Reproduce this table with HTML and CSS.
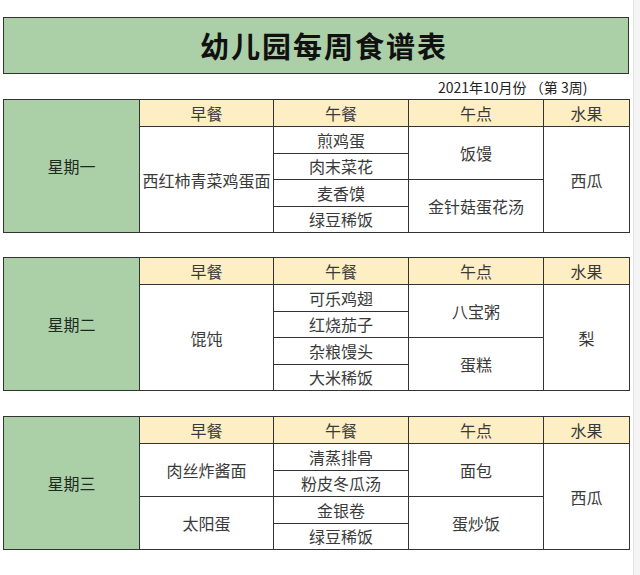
FILE: index.html
```html
<!DOCTYPE html>
<html lang="zh-CN">
<head>
<meta charset="utf-8">
<title>幼儿园每周食谱表</title>
<link rel="stylesheet" href="styles.css">
</head>
<body>
<div class="page">
  <div class="title-box"><h1 class="title">幼儿园每周食谱表</h1></div>
  <div class="subtitle">2021年10月份 （第 3周)</div>

  <table class="menu">
    <colgroup><col class="c-day"><col class="c-bf"><col class="c-lu"><col class="c-sn"><col class="c-fr"></colgroup>
    <tr class="head">
      <td class="day" rowspan="5">星期一</td>
      <td>早餐</td><td>午餐</td><td>午点</td><td>水果</td>
    </tr>
    <tr><td rowspan="4">西红柿青菜鸡蛋面</td><td>煎鸡蛋</td><td rowspan="2">饭馒</td><td rowspan="4">西瓜</td></tr>
    <tr><td>肉末菜花</td></tr>
    <tr><td>麦香馍</td><td rowspan="2">金针菇蛋花汤</td></tr>
    <tr><td>绿豆稀饭</td></tr>
  </table>

  <table class="menu menu-mid">
    <colgroup><col class="c-day"><col class="c-bf"><col class="c-lu"><col class="c-sn"><col class="c-fr"></colgroup>
    <tr class="head">
      <td class="day" rowspan="5">星期二</td>
      <td>早餐</td><td>午餐</td><td>午点</td><td>水果</td>
    </tr>
    <tr><td rowspan="4">馄饨</td><td>可乐鸡翅</td><td rowspan="2">八宝粥</td><td rowspan="4">梨</td></tr>
    <tr><td>红烧茄子</td></tr>
    <tr><td>杂粮馒头</td><td rowspan="2">蛋糕</td></tr>
    <tr><td>大米稀饭</td></tr>
  </table>

  <table class="menu">
    <colgroup><col class="c-day"><col class="c-bf"><col class="c-lu"><col class="c-sn"><col class="c-fr"></colgroup>
    <tr class="head">
      <td class="day" rowspan="5">星期三</td>
      <td>早餐</td><td>午餐</td><td>午点</td><td>水果</td>
    </tr>
    <tr><td rowspan="2">肉丝炸酱面</td><td>清蒸排骨</td><td rowspan="2">面包</td><td rowspan="4">西瓜</td></tr>
    <tr><td>粉皮冬瓜汤</td></tr>
    <tr><td rowspan="2">太阳蛋</td><td>金银卷</td><td rowspan="2">蛋炒饭</td></tr>
    <tr><td>绿豆稀饭</td></tr>
  </table>
</div>
</body>
</html>
```

FILE: styles.css
```css
html, body {
  margin: 0;
  padding: 0;
  background: #f4f4f4;
}
body {
  font-family: "Noto Sans CJK SC", "Noto Sans", sans-serif;
  color: #333;
}
.page {
  width: 634px;
  height: 575px;
  background: #fff;
  border-right: 1px solid #e2e2e2;
  padding-top: 17px;
  box-sizing: border-box;
}
.title-box {
  margin-left: 3px;
  width: 626px;
  height: 57px;
  box-sizing: border-box;
  background: #abd0a8;
  border: 1px solid #333;
  display: flex;
  align-items: center;
  justify-content: center;
}
.title {
  margin: 0;
  font-size: 29px;
  font-weight: bold;
  letter-spacing: 2px;
  color: #111;
  line-height: 1;
  padding-left: 16px;
}
.subtitle {
  height: 25px;
  box-sizing: border-box;
  padding-left: 438px;
  font-size: 14px;
  line-height: 26px;
  color: #222;
}
.menu {
  margin-left: 3px;
  width: 627px;
  border-collapse: collapse;
  table-layout: fixed;
  margin-bottom: 24px;
}
.menu-mid {
  margin-bottom: 25px;
}
.c-day { width: 136px; }
.c-bf { width: 134px; }
.c-lu { width: 135px; }
.c-sn { width: 135px; }
.c-fr { width: 86px; }
.menu td {
  border: 1px solid #333;
  height: 25.5px;
  padding: 0;
  text-align: center;
  vertical-align: middle;
  font-size: 16px;
  line-height: 20px;
  color: #3a3a3a;
  background: #fff;
}
.menu .head td {
  background: #fdeec4;
  height: 26px;
}
.menu .head td.day,
.menu td.day {
  background: #abd0a8;
  color: #1e2a1e;
}
```
